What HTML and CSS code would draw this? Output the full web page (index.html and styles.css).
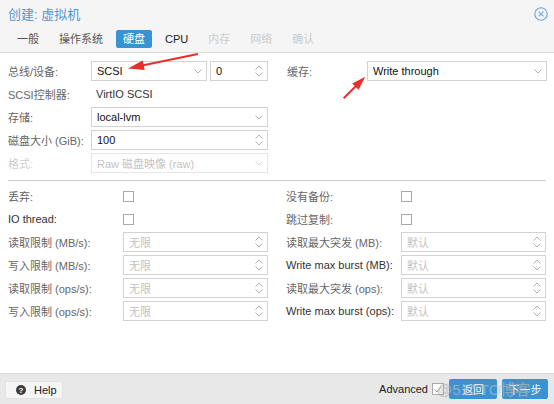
FILE: index.html
```html
<!DOCTYPE html>
<html lang="zh-CN">
<head>
<meta charset="utf-8">
<title>创建: 虚拟机</title>
<link rel="stylesheet" href="styles.css">
</head>
<body>
<div class="dialog">
  <header class="head">
    <div class="title-row">
      <span class="title">创建: 虚拟机</span>
      <svg class="close" width="14" height="14" viewBox="0 0 14 14"><circle cx="7" cy="7" r="6.2" fill="none" stroke="#6ea5d8" stroke-width="1.1"/><path d="M4.6 4.6 L9.4 9.4 M9.4 4.6 L4.6 9.4" stroke="#6ea5d8" stroke-width="1.1"/></svg>
    </div>
    <nav class="tabs">
      <span class="tab">一般</span>
      <span class="tab">操作系统</span>
      <span class="tab active">硬盘</span>
      <span class="tab dark">CPU</span>
      <span class="tab off">内存</span>
      <span class="tab off">网络</span>
      <span class="tab off">确认</span>
    </nav>
  </header>

  <main class="body">
    <section class="grid top">
      <div class="col left">
        <div class="row">
          <span class="label">总线/设备:</span>
          <div class="field bus"><span class="val">SCSI</span><svg class="chev" width="8" height="5" viewBox="0 0 8 5"><path d="M0.5 0.5 L4 4 L7.5 0.5" fill="none" stroke="#b0b0b0"/></svg></div>
          <div class="field dev"><span class="val">0</span><svg class="spin" width="8" height="12" viewBox="0 0 8 12"><path d="M0.5 4.5 L4 1 L7.5 4.5 M0.5 7.5 L4 11 L7.5 7.5" fill="none" stroke="#b0b0b0"/></svg></div>
        </div>
        <div class="row">
          <span class="label">SCSI控制器:</span>
          <span class="plain">VirtIO SCSI</span>
        </div>
        <div class="row">
          <span class="label">存储:</span>
          <div class="field grow"><span class="val">local-lvm</span><svg class="chev" width="8" height="5" viewBox="0 0 8 5"><path d="M0.5 0.5 L4 4 L7.5 0.5" fill="none" stroke="#b0b0b0"/></svg></div>
        </div>
        <div class="row">
          <span class="label">磁盘大小 (GiB):</span>
          <div class="field grow"><span class="val">100</span><svg class="spin" width="8" height="12" viewBox="0 0 8 12"><path d="M0.5 4.5 L4 1 L7.5 4.5 M0.5 7.5 L4 11 L7.5 7.5" fill="none" stroke="#b0b0b0"/></svg></div>
        </div>
        <div class="row">
          <span class="label off">格式:</span>
          <div class="field grow disabled"><span class="val">Raw 磁盘映像 (raw)</span><svg class="chev" width="8" height="5" viewBox="0 0 8 5"><path d="M0.5 0.5 L4 4 L7.5 0.5" fill="none" stroke="#d8d8d8"/></svg></div>
        </div>
      </div>
      <div class="col right">
        <div class="row">
          <span class="label">缓存:</span>
          <div class="field grow"><span class="val">Write through</span><svg class="chev" width="8" height="5" viewBox="0 0 8 5"><path d="M0.5 0.5 L4 4 L7.5 0.5" fill="none" stroke="#b0b0b0"/></svg></div>
        </div>
      </div>
    </section>

    <div class="sep"></div>

    <section class="grid bottom">
      <div class="col">
        <div class="row"><span class="label">丢弃:</span><span class="check"></span></div>
        <div class="row"><span class="label dark">IO thread:</span><span class="check"></span></div>
        <div class="row"><span class="label">读取限制 (MB/s):</span><div class="field grow"><span class="ph">无限</span><svg class="spin" width="8" height="12" viewBox="0 0 8 12"><path d="M0.5 4.5 L4 1 L7.5 4.5 M0.5 7.5 L4 11 L7.5 7.5" fill="none" stroke="#b0b0b0"/></svg></div></div>
        <div class="row"><span class="label">写入限制 (MB/s):</span><div class="field grow"><span class="ph">无限</span><svg class="spin" width="8" height="12" viewBox="0 0 8 12"><path d="M0.5 4.5 L4 1 L7.5 4.5 M0.5 7.5 L4 11 L7.5 7.5" fill="none" stroke="#b0b0b0"/></svg></div></div>
        <div class="row"><span class="label">读取限制 (ops/s):</span><div class="field grow"><span class="ph">无限</span><svg class="spin" width="8" height="12" viewBox="0 0 8 12"><path d="M0.5 4.5 L4 1 L7.5 4.5 M0.5 7.5 L4 11 L7.5 7.5" fill="none" stroke="#b0b0b0"/></svg></div></div>
        <div class="row"><span class="label">写入限制 (ops/s):</span><div class="field grow"><span class="ph">无限</span><svg class="spin" width="8" height="12" viewBox="0 0 8 12"><path d="M0.5 4.5 L4 1 L7.5 4.5 M0.5 7.5 L4 11 L7.5 7.5" fill="none" stroke="#b0b0b0"/></svg></div></div>
      </div>
      <div class="col">
        <div class="row"><span class="label">没有备份:</span><span class="check"></span></div>
        <div class="row"><span class="label">跳过复制:</span><span class="check"></span></div>
        <div class="row"><span class="label">读取最大突发 (MB):</span><div class="field grow"><span class="ph">默认</span><svg class="spin" width="8" height="12" viewBox="0 0 8 12"><path d="M0.5 4.5 L4 1 L7.5 4.5 M0.5 7.5 L4 11 L7.5 7.5" fill="none" stroke="#b0b0b0"/></svg></div></div>
        <div class="row"><span class="label dark">Write max burst (MB):</span><div class="field grow"><span class="ph">默认</span><svg class="spin" width="8" height="12" viewBox="0 0 8 12"><path d="M0.5 4.5 L4 1 L7.5 4.5 M0.5 7.5 L4 11 L7.5 7.5" fill="none" stroke="#b0b0b0"/></svg></div></div>
        <div class="row"><span class="label">读取最大突发 (ops):</span><div class="field grow"><span class="ph">默认</span><svg class="spin" width="8" height="12" viewBox="0 0 8 12"><path d="M0.5 4.5 L4 1 L7.5 4.5 M0.5 7.5 L4 11 L7.5 7.5" fill="none" stroke="#b0b0b0"/></svg></div></div>
        <div class="row"><span class="label dark">Write max burst (ops):</span><div class="field grow"><span class="ph">默认</span><svg class="spin" width="8" height="12" viewBox="0 0 8 12"><path d="M0.5 4.5 L4 1 L7.5 4.5 M0.5 7.5 L4 11 L7.5 7.5" fill="none" stroke="#b0b0b0"/></svg></div></div>
      </div>
    </section>
  </main>

  <footer class="foot">
    <button class="help"><svg width="10" height="10" viewBox="0 0 10 10"><circle cx="5" cy="5" r="5" fill="#3d3d3d"/><text x="5" y="8.2" text-anchor="middle" font-size="8" font-weight="bold" font-family="Liberation Sans, sans-serif" fill="#fff">?</text></svg><span>Help</span></button>
    <span class="spacer"></span>
    <span class="adv">Advanced</span>
    <span class="check checked"><svg width="10" height="10" viewBox="0 0 10 10"><path d="M1.5 5.5 L4 8 L8.8 1.8" fill="none" stroke="#9a9a9a" stroke-width="1"/></svg></span>
    <button class="btn back">返回</button>
    <button class="btn next">下一步</button>
  </footer>

  <span class="watermark">@51CTO博客</span>

  <svg class="annot" width="554" height="404" viewBox="0 0 554 404">
    <line x1="198" y1="54" x2="142" y2="65.5" stroke="#e8302a" stroke-width="2"/>
    <polygon points="128,68.5 144.7,70.1 142.7,60.4" fill="#e8302a"/>
    <line x1="343.7" y1="98.3" x2="357" y2="85" stroke="#e8302a" stroke-width="2"/>
    <polygon points="365.3,76.7 358.6,89.8 352.2,83.4" fill="#e8302a"/>
  </svg>
</div>
</body>
</html>
```

FILE: styles.css
```css
* { box-sizing: border-box; }
html, body { margin: 0; padding: 0; }
body {
  font-family: "Liberation Sans", "Noto Sans CJK SC", sans-serif;
  font-size: 11px;
  color: #222;
  background: #fff;
}
.dialog {
  position: relative;
  width: 554px;
  height: 404px;
  display: flex;
  flex-direction: column;
  overflow: hidden;
}

/* header */
.head {
  background: #f5f5f5;
  border-bottom: 1px solid #dcdcdc;
  padding-bottom: 4px;
}
.title-row {
  height: 26px;
  display: flex;
  align-items: center;
  justify-content: space-between;
  padding: 1px 6px 0 8px;
}
.title {
  font-size: 13px;
  color: #5596d0;
}
.close { display: block; }
.tabs {
  display: flex;
  gap: 6px;
  padding-left: 10px;
  margin-top: 4px;
  height: 18px;
}
.tab {
  padding: 0 7px;
  line-height: 18px;
  font-size: 11px;
  color: #555;
  border-radius: 2px;
}
.tab.dark { color: #222; }
.tab.off { color: #cbcbcb; }
.tab.active { background: #3892d4; color: #fff; }

/* body */
.body {
  flex: 1;
  padding: 8px 7px 0 8px;
}
.grid {
  display: grid;
  grid-template-columns: 260px 260px;
}
.grid.top { column-gap: 19px; }
.grid.bottom { column-gap: 18px; }
.col {
  display: flex;
  flex-direction: column;
  gap: 3px;
}
.row {
  height: 20px;
  display: flex;
  align-items: center;
}
.top .left .label { width: 83px; }
.top .right .label { width: 80px; }
.bottom .label { width: 115px; }
.label {
  flex: none;
  color: #666;
  white-space: nowrap;
}
.label.dark { color: #333; }
.label.off { color: #cfcfcf; }
.plain { padding-left: 5px; color: #333; }

.field {
  height: 20px;
  border: 1px solid #d2d2d2;
  background: #fff;
  display: flex;
  align-items: center;
  padding: 0 4px 0 5px;
}
.field.bus { width: 116px; }
.field.dev { width: 58px; margin-left: 3px; }
.field.grow { flex: 1; }
.field.disabled { border-color: #e6e6e6; }
.field.disabled .val { color: #c4c4c4; }
.val { flex: 1; color: #111; white-space: nowrap; }
.ph { flex: 1; color: #c2c2c2; }
.chev, .spin { flex: none; display: block; }

.sep {
  height: 1px;
  background: #cfcfcf;
  margin: 7px 1px 5px 0;
}

.check {
  width: 11px;
  height: 11px;
  border: 1px solid #a9a9a9;
  background: #fff;
  display: inline-block;
  flex: none;
}

/* footer */
.foot {
  height: 31px;
  background: #e8e8e8;
  border-top: 1px solid #dadada;
  display: flex;
  align-items: center;
  padding: 0 6px 0 5px;
}
.help {
  width: 58px;
  height: 18px;
  margin-top: 2px;
  display: flex;
  align-items: center;
  gap: 8px;
  padding: 0 0 0 10px;
  background: #f5f5f5;
  border: 1px solid #e2e2e2;
  border-radius: 2px;
  font-family: inherit;
  font-size: 11px;
  color: #222;
}
.help svg { display: block; }
.spacer { flex: 1; }
.adv { color: #222; margin-right: 4px; }
.check.checked {
  width: 12px;
  height: 12px;
  display: flex;
  align-items: center;
  justify-content: center;
  margin-right: 5px;
}
.btn {
  height: 20px;
  border: none;
  border-radius: 2px;
  background: #3892d4;
  color: #fff;
  font-family: inherit;
  font-size: 11px;
  padding: 0;
}
.btn.back { width: 48px; margin-right: 5px; }
.btn.next { width: 46px; }

.watermark {
  position: absolute;
  left: 437px;
  top: 378px;
  font-size: 15px;
  color: rgba(255, 255, 255, 0.35);
  -webkit-text-stroke: 0.6px rgba(150, 150, 150, 0.55);
  pointer-events: none;
}
.annot {
  position: absolute;
  left: 0;
  top: 0;
  pointer-events: none;
}
```
